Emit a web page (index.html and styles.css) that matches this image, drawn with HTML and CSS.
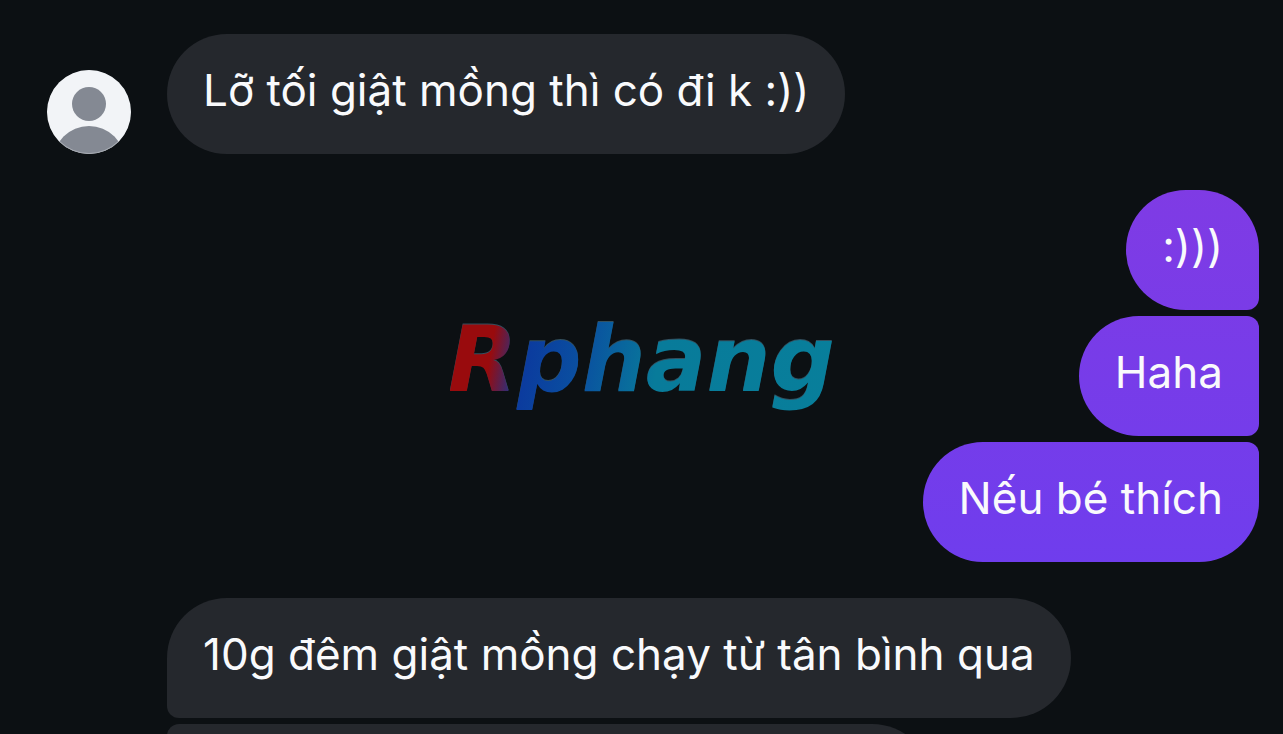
FILE: index.html
```html
<!DOCTYPE html>
<html lang="vi">
<head>
<meta charset="utf-8">
<meta name="viewport" content="width=device-width, initial-scale=1">
<title>Chat</title>
<link rel="stylesheet" href="styles.css">
</head>
<body>
<main class="chat">
  <section class="row">
    <svg class="avatar" viewBox="0 0 84 84" aria-hidden="true">
      <defs><clipPath id="disc"><circle cx="42" cy="42" r="42"/></clipPath></defs>
      <g clip-path="url(#disc)">
        <rect width="84" height="84" fill="#f2f4f7"/>
        <circle cx="42" cy="34" r="17" fill="#848993"/>
        <circle cx="42" cy="92" r="36" fill="#848993"/>
        <circle cx="42" cy="42" r="41.5" fill="none" stroke="#f2f4f7" stroke-opacity=".3"/>
      </g>
    </svg>
    <p class="bubble">Lỡ tối giật mồng thì có đi k :))</p>
  </section>
  <section class="group sent">
    <p class="bubble first">:)))</p>
    <p class="bubble middle">Haha</p>
    <p class="bubble last">Nếu bé thích</p>
  </section>
  <section class="group received">
    <p class="bubble first">10g đêm giật mồng chạy từ tân bình qua</p>
    <p class="bubble middle next"></p>
  </section>
  <div class="watermark"><span class="wordmark">Rphang</span></div>
</main>
</body>
</html>
```

FILE: styles.css
```css
* {
  box-sizing: border-box;
}

body {
  margin: 0;
  background: #0c1013;
  color: #f9fafc;
  font-family: Inter, "Noto Sans", sans-serif;
  font-size: 44px;
  line-height: 48px;
}

.chat {
  position: relative;
  display: flex;
  flex-direction: column;
  gap: 36px;
  height: 100vh;
  padding: 34px 24px 0 47px;
  overflow: hidden;
}

.row {
  display: flex;
  flex-shrink: 0;
  align-items: flex-end;
  gap: 36px;
}

.avatar {
  flex-shrink: 0;
  width: 84px;
  height: 84px;
}

.group {
  display: flex;
  flex-shrink: 0;
  flex-direction: column;
  align-items: flex-start;
  gap: 6px;
}

.bubble {
  min-height: 120px;
  margin: 0;
  padding: 32px 36px 40px;
  border-radius: 60px;
  background: #25282d;
}

.received {
  padding-left: 120px;
}

.received .first {
  border-bottom-left-radius: 12px;
}

.received .middle {
  border-top-left-radius: 12px;
  border-bottom-left-radius: 12px;
}

.next {
  width: 765px;
}

.sent {
  align-items: flex-end;
}

.sent .bubble {
  background: linear-gradient(#873ae0, #683ef1) fixed;
}

.sent .first {
  border-bottom-right-radius: 12px;
}

.sent .middle {
  border-top-right-radius: 12px;
  border-bottom-right-radius: 12px;
}

.sent .last {
  border-top-right-radius: 12px;
}

.watermark {
  position: absolute;
  inset: 0;
  display: flex;
  align-items: center;
  justify-content: center;
  padding-bottom: 14px;
  pointer-events: none;
}

.wordmark {
  padding: 0 8px;
  background: linear-gradient(100deg, #990b0d 14%, #0b3a9e 22%, #0a50a0 36%, #087b9a 54%, #087f9b 100%);
  background-clip: text;
  -webkit-background-clip: text;
  color: transparent;
  font-family: "DejaVu Sans", sans-serif;
  font-size: 90px;
  font-style: italic;
  font-weight: 700;
  line-height: 112px;
  filter: drop-shadow(0 -1px 0 #33505f);
}
```
